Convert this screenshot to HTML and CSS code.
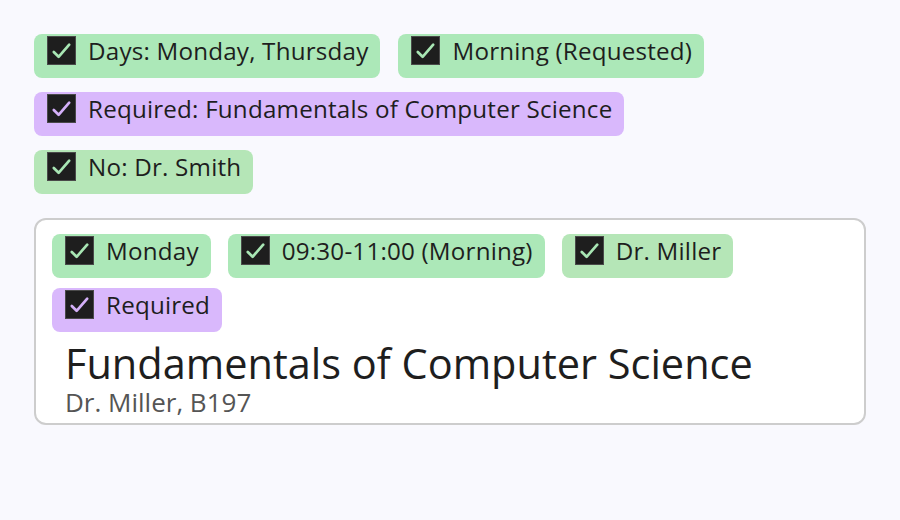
FILE: index.html
```html
<!DOCTYPE html>
<html>
<head>
<meta charset="utf-8">
<link rel="stylesheet" href="styles.css">
</head>
<body>
<div class="filters">
  <div class="row">
    <span class="chip green"><span class="box"><svg viewBox="0 0 28 28"><path d="M6 15.5 L11 20.5 L22 8"/></svg></span><span class="label">Days: Monday, Thursday</span></span>
    <span class="chip green"><span class="box"><svg viewBox="0 0 28 28"><path d="M6 15.5 L11 20.5 L22 8"/></svg></span><span class="label">Morning (Requested)</span></span>
  </div>
  <div class="row">
    <span class="chip purple"><span class="box"><svg viewBox="0 0 28 28"><path d="M6 15.5 L11 20.5 L22 8"/></svg></span><span class="label">Required: Fundamentals of Computer Science</span></span>
  </div>
  <div class="row">
    <span class="chip sage"><span class="box"><svg viewBox="0 0 28 28"><path d="M6 15.5 L11 20.5 L22 8"/></svg></span><span class="label">No: Dr. Smith</span></span>
  </div>
</div>
<div class="card">
  <div class="card-tags">
    <span class="chip green"><span class="box"><svg viewBox="0 0 28 28"><path d="M6 15.5 L11 20.5 L22 8"/></svg></span><span class="label">Monday</span></span>
    <span class="chip green"><span class="box"><svg viewBox="0 0 28 28"><path d="M6 15.5 L11 20.5 L22 8"/></svg></span><span class="label">09:30-11:00 (Morning)</span></span>
    <span class="chip sage"><span class="box"><svg viewBox="0 0 28 28"><path d="M6 15.5 L11 20.5 L22 8"/></svg></span><span class="label">Dr. Miller</span></span>
    <span class="chip purple"><span class="box"><svg viewBox="0 0 28 28"><path d="M6 15.5 L11 20.5 L22 8"/></svg></span><span class="label">Required</span></span>
  </div>
  <div class="course">
    <div class="title">Fundamentals of Computer Science</div>
    <div class="sub">Dr. Miller, B197</div>
  </div>
</div>
</body>
</html>
```
FILE: styles.css
```css
* { box-sizing: border-box; }
html, body { margin: 0; }
body {
  background: #f9f9fe;
  font-family: "Open Sans", "Noto Sans", sans-serif;
  color: #1e1e1e;
  padding: 34px;
}
.filters {
  display: flex;
  flex-direction: column;
  gap: 14px;
}
.row {
  display: flex;
  gap: 18px;
}
.chip {
  display: inline-flex;
  align-items: flex-start;
  gap: 12px;
  height: 44px;
  padding: 2px 12px 0 13px;
  border-radius: 8px;
  font-size: 24.2px;
  line-height: 30px;
  letter-spacing: 0.2px;
}
.chip.green { background: #ace8b8; --tick: #a8e6b4; }
.chip.sage { background: #b5e6b7; --tick: #a8e6b4; }
.chip.purple { background: #d9b8fc; --tick: #d4b0f8; }
.box {
  width: 29px;
  height: 29px;
  background: #1e1e1e;
  border: 1px solid #4a4a4a;
  flex: none;
  display: block;
}
.box svg {
  display: block;
  width: 27px;
  height: 27px;
}
.box path {
  fill: none;
  stroke: var(--tick);
  stroke-width: 2.8;
  stroke-linecap: round;
  stroke-linejoin: round;
}
.label { white-space: nowrap; }
.card {
  margin-top: 24px;
  background: #ffffff;
  border: 2px solid #cdcdcd;
  border-radius: 12px;
  padding: 14px 16px 6px;
}
.card-tags {
  display: flex;
  flex-wrap: wrap;
  gap: 10px 17px;
  max-width: 720px;
}
.course {
  padding-left: 13px;
  margin-top: 9px;
}
.title {
  font-size: 41.5px;
  line-height: 44px;
  color: #1e1e1e;
}
.sub {
  margin-top: 2px;
  font-size: 26px;
  line-height: 30px;
  color: #555555;
}
```
